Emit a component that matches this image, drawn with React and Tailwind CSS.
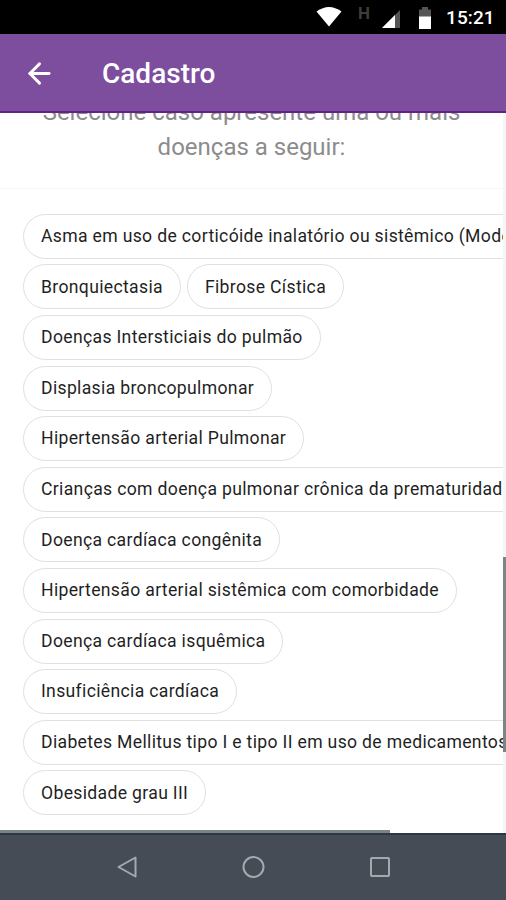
import { ArrowLeft } from 'lucide-react';

const rows = [
  ['Asma em uso de corticóide inalatório ou sistêmico (Moderada ou Grave)'],
  ['Bronquiectasia', 'Fibrose Cística'],
  ['Doenças Intersticiais do pulmão'],
  ['Displasia broncopulmonar'],
  ['Hipertensão arterial Pulmonar'],
  ['Crianças com doença pulmonar crônica da prematuridade'],
  ['Doença cardíaca congênita'],
  ['Hipertensão arterial sistêmica com comorbidade'],
  ['Doença cardíaca isquêmica'],
  ['Insuficiência cardíaca'],
  ['Diabetes Mellitus tipo I e tipo II em uso de medicamentos'],
  ['Obesidade grau III'],
];

function StatusBar() {
  return (
    <div className="flex h-[34px] shrink-0 items-center bg-black pl-[316px] text-white">
      <svg width="26" height="20" viewBox="0 0 26 20" fill="currentColor">
        <path d="M.5 4.5Q13-4.5 25.5 4.5L13 19.5Z" />
      </svg>
      <span className="-mt-[7px] ml-[16px] w-[13px] text-[17px] leading-none font-bold text-[#3d3d3d]">H</span>
      <svg className="mt-[3px] ml-[11px]" width="18" height="18" viewBox="0 0 18 18">
        <path d="M0 18 18 0V18Z" fill="#555" />
        <path d="M0 18 13 5V18Z" fill="#fff" />
      </svg>
      <svg className="mt-[2px] ml-[19px]" width="12" height="22" viewBox="0 0 12 22">
        <path d="M0 2.5H3V0H9V2.5H12V10H0Z" fill="#555" />
        <path d="M0 9.5H12V22H0Z" fill="#fff" />
      </svg>
      <span className="mt-[3px] ml-[15px] text-[19px] font-medium tracking-[0.1px]">15:21</span>
    </div>
  );
}

function Header() {
  return (
    <header className="flex h-[79px] shrink-0 items-center border-b-2 border-[#65218a] bg-[#7d4d9e] pl-[23px] text-white">
      <ArrowLeft className="mt-[2px]" size={33} strokeWidth={2.1} />
      <h1 className="mt-[2px] ml-[46px] text-[28px] font-medium">Cadastro</h1>
    </header>
  );
}

function Chip({ label }) {
  return (
    <button className="h-[45px] shrink-0 rounded-full border border-[#e0e0e0] bg-white px-[17px] text-[17.6px] tracking-[0.33px] whitespace-nowrap text-[#1f1f1f]">
      {label}
    </button>
  );
}

function NavBar() {
  return (
    <nav className="flex h-[67px] shrink-0 items-center justify-between border-t-2 border-[#2c3944] bg-[#454c55] px-[113px] pb-[2px] text-[#a3aaae]">
      <svg width="26" height="26" viewBox="0 0 26 26" fill="none" stroke="currentColor" strokeWidth="2">
        <path d="M22.5 3.5V22.5L5.5 13Z" strokeLinejoin="round" />
      </svg>
      <svg width="26" height="26" viewBox="0 0 26 26" fill="none" stroke="currentColor" strokeWidth="2">
        <circle cx="13.5" cy="13" r="10" />
      </svg>
      <svg width="26" height="26" viewBox="0 0 26 26" fill="none" stroke="currentColor" strokeWidth="2">
        <rect x="4" y="4" width="18" height="18" rx="1" />
      </svg>
    </nav>
  );
}

export default function App() {
  return (
    <div className="flex h-[900px] w-[506px] flex-col overflow-hidden bg-white font-['Roboto',sans-serif]">
      <StatusBar />
      <Header />
      <main className="relative flex h-[720px] shrink-0 overflow-hidden">
        <div className="flex w-[503px] shrink-0 flex-col justify-end overflow-hidden">
          <p className="border-b border-[#f5f5f5] pb-[23px] text-center text-[24px] leading-[35px] text-[#8c8c8c]">
            Selecione caso apresente uma ou mais
            <br />
            doenças a seguir:
          </p>
          <div className="flex flex-col gap-[5.6px] pt-[24.7px] pb-[17.7px] pl-[23px]">
            {rows.map((row) => (
              <div key={row[0]} className="flex gap-[6px]">
                {row.map((label) => (
                  <Chip key={label} label={label} />
                ))}
              </div>
            ))}
          </div>
        </div>
        <div className="w-[3px] bg-[#f6f6f6] pt-[444px]">
          <div className="h-[195px] bg-[#7c8585]" />
        </div>
        <div className="absolute bottom-0 left-0 h-[3px] w-[390px] bg-[#7c8585]" />
      </main>
      <NavBar />
    </div>
  );
}
